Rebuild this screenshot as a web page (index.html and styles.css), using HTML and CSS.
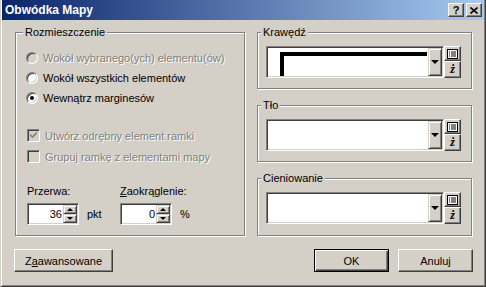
FILE: index.html
```html
<!DOCTYPE html>
<html lang="pl">
<head>
	<meta charset="UTF-8">
	<title>Obwódka Mapy</title>
	<link rel="stylesheet" href="styles.css">
</head>
<body>
	<div class="window">
		<div class="titlebar">
			<span class="title">Obwódka Mapy</span>
			<div class="caption-buttons">
				<span class="cap-btn">?</span>
				<span class="cap-btn">
					<svg width="8" height="7" viewBox="0 0 8 7"><path d="M0.5 0.5 L7.5 6.5 M7.5 0.5 L0.5 6.5" stroke="#000" stroke-width="1.6"/></svg>
				</span>
			</div>
		</div>
		<div class="content">
			<div class="main">
				<div class="group group-left">
					<span class="group-title">Rozmieszczenie</span>
					<div class="option disabled"><span class="radio"></span>Wokół wybranego(ych) elementu(ów)</div>
					<div class="option"><span class="radio"></span>Wokół wszystkich elementów</div>
					<div class="option"><span class="radio checked"></span>Wewnątrz marginesów</div>

					<div class="checks">
						<div class="check-row disabled">
							<span class="checkbox">
								<svg width="7" height="7" viewBox="0 0 7 7"><path d="M0 2.5 L2.5 5 L7 0.5" stroke="#808080" stroke-width="1.6" fill="none"/></svg>
							</span>
							Utwórz odrębny element ramki
						</div>
						<div class="check-row disabled"><span class="checkbox"></span>Grupuj ramkę z elementami mapy</div>
					</div>

					<div class="fields">
						<div class="field field-gap">
							<div class="field-label">Przerwa:</div>
							<div class="spin-row">
								<div class="spin">
									<span class="spin-value">36</span>
									<span class="spin-buttons"><span class="spin-btn"><i class="arrow-up"></i></span><span class="spin-btn"><i class="arrow-down"></i></span></span>
								</div>
								<span class="unit">pkt</span>
							</div>
						</div>
						<div class="field">
							<div class="field-label"><u>Z</u>aokrąglenie:</div>
							<div class="spin-row">
								<div class="spin">
									<span class="spin-value">0</span>
									<span class="spin-buttons"><span class="spin-btn"><i class="arrow-up"></i></span><span class="spin-btn"><i class="arrow-down"></i></span></span>
								</div>
								<span class="unit">%</span>
							</div>
						</div>
					</div>
				</div>

				<div class="column-right">
					<div class="group group-right">
						<span class="group-title">Krawędź</span>
						<div class="combo">
							<div class="combo-field">
								<div class="combo-preview"><div class="line-corner"></div></div>
								<span class="drop-btn"><i class="arrow-down"></i></span>
							</div>
							<div class="combo-tools">
								<span class="tool-btn"><svg width="11" height="10" viewBox="0 0 11 10"><rect x="0.5" y="0.5" width="10" height="9" fill="#fff" stroke="#000"/><path d="M2 3 H3 M4 3 H9 M2 5 H3 M4 5 H9 M2 7 H3 M4 7 H9" stroke="#000"/></svg></span>
								<span class="tool-btn tool-z">ż</span>
							</div>
						</div>
					</div>
					<div class="group group-right">
						<span class="group-title">Tło</span>
						<div class="combo">
							<div class="combo-field">
								<div class="combo-preview"></div>
								<span class="drop-btn"><i class="arrow-down"></i></span>
							</div>
							<div class="combo-tools">
								<span class="tool-btn"><svg width="11" height="10" viewBox="0 0 11 10"><rect x="0.5" y="0.5" width="10" height="9" fill="#fff" stroke="#000"/><path d="M2 3 H3 M4 3 H9 M2 5 H3 M4 5 H9 M2 7 H3 M4 7 H9" stroke="#000"/></svg></span>
								<span class="tool-btn tool-z">ż</span>
							</div>
						</div>
					</div>
					<div class="group group-right group-last">
						<span class="group-title">Cieniowanie</span>
						<div class="combo">
							<div class="combo-field">
								<div class="combo-preview"></div>
								<span class="drop-btn"><i class="arrow-down"></i></span>
							</div>
							<div class="combo-tools">
								<span class="tool-btn"><svg width="11" height="10" viewBox="0 0 11 10"><rect x="0.5" y="0.5" width="10" height="9" fill="#fff" stroke="#000"/><path d="M2 3 H3 M4 3 H9 M2 5 H3 M4 5 H9 M2 7 H3 M4 7 H9" stroke="#000"/></svg></span>
								<span class="tool-btn tool-z">ż</span>
							</div>
						</div>
					</div>
				</div>
			</div>

			<div class="footer">
				<button class="btn btn-wide">Z<u>a</u>awansowane</button>
				<div class="footer-right">
					<button class="btn btn-default">OK</button>
					<button class="btn">Anuluj</button>
				</div>
			</div>
		</div>
	</div>
</body>
</html>
```

FILE: styles.css
```css
* {
	box-sizing: border-box;
}

body {
	margin: 0;
	background-color: #d4d0c8;
	font-family: "Liberation Sans", Arial, sans-serif;
	font-size: 11px;
	color: #000;
}

.window {
	display: flex;
	flex-direction: column;
	width: 486px;
	height: 287px;
	padding: 0 1px 1px 1px;
	border: 1px solid;
	border-top: none;
	border-color: #d4d0c8 #404040 #404040 #d4d0c8;
	box-shadow: inset 1px 0 0 #fff, inset -1px -1px 0 #808080;
	background-color: #d4d0c8;
}

/* Title bar */
.titlebar {
	display: flex;
	align-items: center;
	justify-content: space-between;
	height: 20px;
	padding: 0 2px 0 3px;
	background: linear-gradient(to right, #0a246a, #a6caf0);
	color: #fff;
	font-weight: bold;
	font-size: 12px;
}

.caption-buttons {
	display: flex;
	gap: 2px;
}

.cap-btn {
	display: flex;
	align-items: center;
	justify-content: center;
	width: 16px;
	height: 14px;
	border: 1px solid;
	border-color: #fff #404040 #404040 #fff;
	box-shadow: inset -1px -1px 0 #808080;
	background-color: #d4d0c8;
	color: #000;
	font-size: 11px;
	font-weight: bold;
}

/* Content */
.content {
	flex: 1;
	padding: 12px 12px 0 13px;
}

.main {
	display: flex;
	gap: 12px;
	height: 204px;
}

.group {
	position: relative;
	border: 1px solid #808080;
	box-shadow: inset 1px 1px 0 #fff, 1px 1px 0 #fff;
}

.group-title {
	position: absolute;
	top: -7px;
	left: 3px;
	padding: 0 2px;
	line-height: 13px;
	background-color: #d4d0c8;
}

.group-left {
	width: 230px;
	padding: 15px 0 0 10px;
}

.group-left .group-title {
	left: 7px;
}

.disabled {
	color: #808080;
	text-shadow: 1px 1px 0 #fff;
}

.option {
	display: flex;
	align-items: center;
	gap: 5px;
	height: 20px;
}

.radio {
	position: relative;
	width: 12px;
	height: 12px;
	border-radius: 50%;
	border: 1px solid;
	border-color: #808080 #fff #fff #808080;
	box-shadow: inset 1px 1px 0 #404040, inset -1px -1px 0 #d4d0c8;
	background-color: #fff;
}

.disabled .radio {
	background-color: #d4d0c8;
}

.radio.checked::after {
	content: "";
	position: absolute;
	left: 3px;
	top: 3px;
	width: 4px;
	height: 4px;
	border-radius: 50%;
	background-color: #000;
}

.checks {
	margin-top: 17px;
}

.check-row {
	display: flex;
	align-items: center;
	gap: 5px;
	height: 21px;
	padding-left: 1px;
}

.checkbox {
	display: flex;
	align-items: center;
	justify-content: center;
	width: 13px;
	height: 13px;
	border: 1px solid;
	border-color: #808080 #fff #fff #808080;
	box-shadow: inset 1px 1px 0 #404040, inset -1px -1px 0 #d4d0c8;
	background-color: #fff;
}

.disabled .checkbox {
	background-color: #d4d0c8;
}

.fields {
	display: flex;
	margin-top: 18px;
	padding-left: 1px;
}

.field-gap {
	width: 93px;
}

.field-label {
	line-height: 13px;
	margin-bottom: 5px;
}

.spin-row {
	display: flex;
	align-items: center;
	gap: 8px;
}

.spin {
	display: flex;
	width: 52px;
	height: 22px;
	padding: 2px;
	border: 1px solid;
	border-color: #808080 #fff #fff #808080;
	box-shadow: inset 1px 1px 0 #404040, inset -1px -1px 0 #d4d0c8;
	background-color: #fff;
}

.spin-value {
	flex: 1;
	align-self: center;
	text-align: right;
	padding-right: 1px;
}

.spin-buttons {
	display: flex;
	flex-direction: column;
	width: 14px;
	margin: -1px -1px -1px 0;
}

.spin-btn {
	display: flex;
	flex: 1;
	align-items: center;
	justify-content: center;
	border: 1px solid;
	border-color: #d4d0c8 #404040 #404040 #d4d0c8;
	box-shadow: inset 1px 1px 0 #fff, inset -1px -1px 0 #808080;
	background-color: #d4d0c8;
}

.arrow-up,
.arrow-down {
	display: block;
	width: 0;
	height: 0;
	border-left: 3px solid transparent;
	border-right: 3px solid transparent;
}

.arrow-up {
	border-bottom: 3px solid #000;
}

.arrow-down {
	border-top: 3px solid #000;
}

/* Right column */
.column-right {
	display: flex;
	flex-direction: column;
	gap: 16px;
	width: 215px;
}

.group-right {
	height: 57px;
	padding: 13px 0 0 8px;
}

.group-last {
	height: 58px;
}

.combo {
	display: flex;
	width: 195px;
	height: 32px;
}

.combo-field {
	display: flex;
	flex: 1;
	padding: 1px;
	border: 1px solid;
	border-color: #808080 #fff #fff #808080;
	box-shadow: inset 1px 1px 0 #404040, inset -1px -1px 0 #d4d0c8;
	background-color: #fff;
}

.combo-preview {
	display: flex;
	flex: 1;
}

.line-corner {
	flex: 1;
	margin: 4px 1px 0 12px;
	border-top: 4px solid #000;
	border-left: 4px solid #000;
}

.drop-btn {
	display: flex;
	align-items: center;
	justify-content: center;
	width: 14px;
	border: 1px solid;
	border-color: #d4d0c8 #404040 #404040 #d4d0c8;
	box-shadow: inset 1px 1px 0 #fff, inset -1px -1px 0 #808080;
	background-color: #d4d0c8;
}

.drop-btn .arrow-down {
	border-left-width: 4px;
	border-right-width: 4px;
	border-top-width: 4px;
}

.combo-tools {
	display: flex;
	flex-direction: column;
	width: 17px;
}

.tool-btn {
	display: flex;
	flex: 1;
	align-items: center;
	justify-content: center;
	border: 1px solid;
	border-color: #fff #404040 #404040 #fff;
	box-shadow: inset -1px -1px 0 #808080;
	background-color: #d4d0c8;
}

.tool-z {
	font-family: "Liberation Serif", serif;
	font-style: italic;
	font-weight: bold;
	font-size: 12px;
}

/* Footer */
.footer {
	display: flex;
	justify-content: space-between;
	margin: 13px -1px 0 -1px;
}

.footer-right {
	display: flex;
	gap: 9px;
}

.btn {
	width: 75px;
	height: 23px;
	padding: 0;
	border: 1px solid;
	border-color: #fff #404040 #404040 #fff;
	box-shadow: inset -1px -1px 0 #808080;
	background-color: #d4d0c8;
	font-family: "Liberation Sans", Arial, sans-serif;
	font-size: 11px;
	color: #000;
}

.btn-wide {
	width: 99px;
}

.btn-default {
	border-color: #000;
	box-shadow: inset 1px 1px 0 #fff, inset -1px -1px 0 #404040, inset -2px -2px 0 #808080;
}
```
